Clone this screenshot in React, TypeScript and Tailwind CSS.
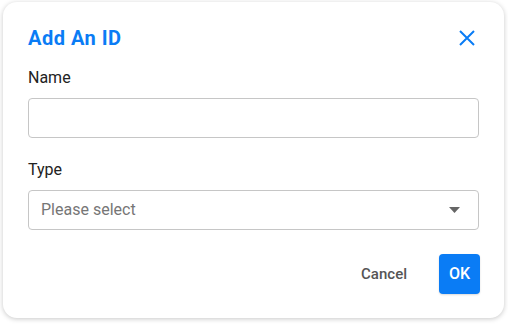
import React from "react";

export default function App() {
  return (
    <div
      className="w-[508px] h-[325px] bg-white pt-[2px] pl-[3px]"
      style={{ fontFamily: "Roboto, 'Liberation Sans', sans-serif" }}
    >
      <div className="w-[501px] rounded-[14px] bg-white px-[25px] pt-[24px] pb-[24px] shadow-[0_1px_5px_rgba(0,0,0,0.22)]">
        <div className="flex items-center justify-between h-[24px]">
          <h2 className="text-[20px] leading-[24px] font-bold tracking-[0.5px] text-[#0a7cf5]">Add An ID</h2>
          <button className="w-[24px] h-[24px] flex items-center justify-center">
            <svg width="24" height="24" viewBox="0 0 24 24">
              <path d="M5 5 L19 19 M19 5 L5 19" stroke="#0a7cf5" strokeWidth="2" fill="none" />
            </svg>
          </button>
        </div>

        <label className="block mt-[18px] text-[16px] leading-[20px] text-[#222]">Name</label>
        <input className="mt-[10px] block w-full h-[40px] rounded-[4px] border border-[#c6c6c6] px-3 text-[16px] outline-none" />

        <label className="block mt-[22px] text-[16px] leading-[20px] text-[#222]">Type</label>
        <div className="mt-[10px] flex items-center justify-between h-[40px] rounded-[4px] border border-[#c6c6c6] pl-[12px] pr-[18px]">
          <span className="text-[16px] text-[#767676]">Please select</span>
          <svg width="11" height="6" viewBox="0 0 11 6">
            <path d="M0 0 L11 0 L5.5 6 Z" fill="#666" />
          </svg>
        </div>

        <div className="mt-[24px] flex justify-end items-center gap-4">
          <button className="h-[40px] px-4 text-[15px] font-medium text-[#555]">Cancel</button>
          <button className="h-[40px] w-[41px] rounded-[4px] bg-[#0a7cf5] text-white text-[16px] font-medium shadow-[0_1px_2px_rgba(0,0,0,0.15)] mr-[-1px]">
            OK
          </button>
        </div>
      </div>
    </div>
  );
}
